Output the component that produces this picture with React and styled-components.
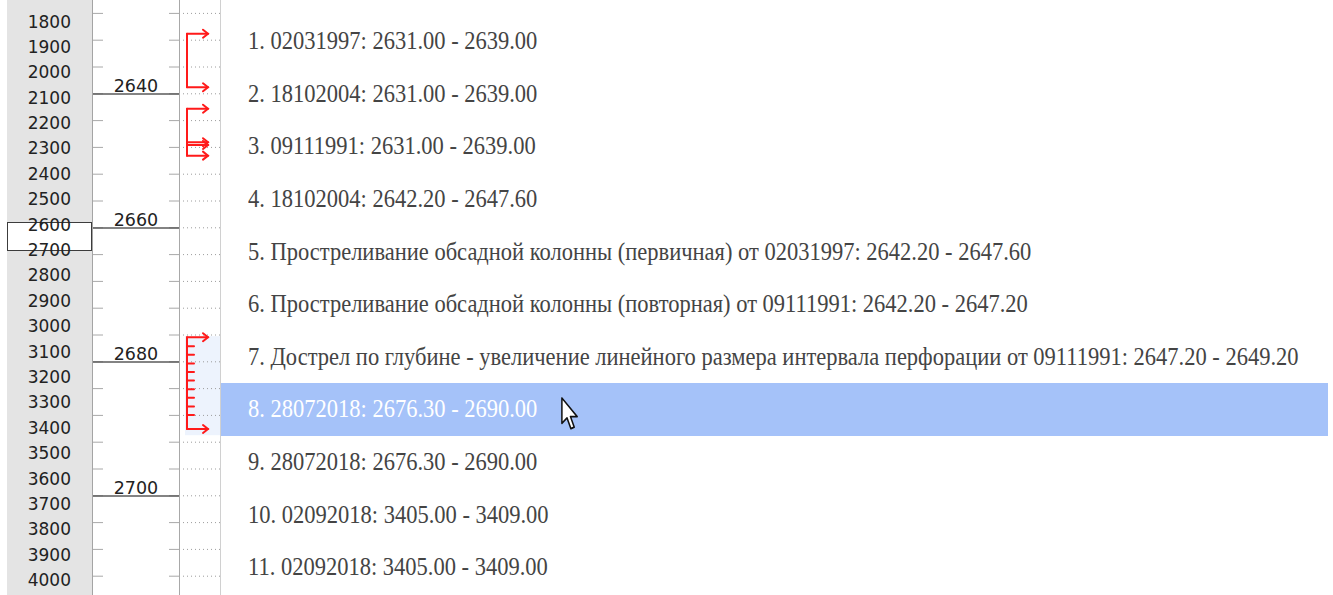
import styled, { createGlobalStyle } from 'styled-components';

const GlobalStyle = createGlobalStyle`
  html, body {
    margin: 0;
    padding: 0;
    background: #fff;
    overflow: hidden;
  }
`;

// depth axis: 2640 sits at y=94, one metre = 6.7px
const depthY = (d) => 94 + (d - 2640) * 6.7;
const TICK_STEP = 26.8;
const TICKS = Array.from({ length: 22 }, (_, k) => 13.4 + k * TICK_STEP);
const MAJORS = [
  { y: depthY(2640), label: '2640' },
  { y: depthY(2660), label: '2660' },
  { y: depthY(2680), label: '2680' },
  { y: depthY(2700), label: '2700' },
];

const SCALE = Array.from({ length: 23 }, (_, i) => 1800 + i * 100);

const INTERVALS = [
  '1. 02031997: 2631.00 - 2639.00',
  '2. 18102004: 2631.00 - 2639.00',
  '3. 09111991: 2631.00 - 2639.00',
  '4. 18102004: 2642.20 - 2647.60',
  '5. Простреливание обсадной колонны (первичная) от 02031997: 2642.20 - 2647.60',
  '6. Простреливание обсадной колонны (повторная) от 09111991: 2642.20 - 2647.20',
  '7. Дострел по глубине - увеличение линейного размера интервала перфорации от 09111991: 2647.20 - 2649.20',
  '8. 28072018: 2676.30 - 2690.00',
  '9. 28072018: 2676.30 - 2690.00',
  '10. 02092018: 3405.00 - 3409.00',
  '11. 02092018: 3405.00 - 3409.00',
];

const SELECTED = 7;

const Page = styled.div`
  position: relative;
  display: flex;
  height: 595px;
  padding-left: 7px;
  box-sizing: border-box;
`;

const ScaleColumn = styled.div`
  position: relative;
  width: 85px;
  flex: none;
  background: #e4e4e4;
  border-right: 1px solid #a4a4a4;
  padding-top: 9.5px;
  display: flex;
  flex-direction: column;
`;

const ScaleLabel = styled.div`
  position: relative;
  z-index: 1;
  height: 25.4px;
  line-height: 25.4px;
  padding-right: 21px;
  text-align: right;
  font-family: "DejaVu Sans", sans-serif;
  font-size: 17px;
  color: #222;
`;

const Window = styled.div`
  position: absolute;
  left: 0;
  top: 222px;
  width: 85px;
  height: 29px;
  box-sizing: border-box;
  border: 1.5px solid #3c3c3c;
  background: #fff;
`;

const Track = styled.svg`
  display: block;
  flex: none;
  height: 595px;
`;

const MarkerTrack = styled(Track)`
  border-right: 1px solid #d0d0d0;
`;

const List = styled.div`
  flex: 1;
  padding-top: 15px;
  padding-right: 5px;
  display: flex;
  flex-direction: column;
`;

const Row = styled.div`
  height: 52.6px;
  display: flex;
  align-items: center;
  padding-left: 27px;
  background: ${(p) => (p.$selected ? '#a5c2f9' : 'transparent')};
  color: ${(p) => (p.$selected ? '#fff' : '#444')};
`;

const RowText = styled.span`
  display: inline-block;
  font-family: "Liberation Serif", "Times New Roman", serif;
  font-size: 22.5px;
  white-space: nowrap;
  transform: scaleY(1.13);
`;

const Pointer = styled.svg`
  position: absolute;
  left: 561px;
  top: 397px;
  width: 18px;
  height: 34px;
`;

const DepthTrack = () => (
  <Track width="87" viewBox="0 0 87 595">
    {TICKS.map((y) => (
      <g key={y} stroke="#a8a8a8" strokeWidth="1">
        <line x1="0" y1={y} x2="10" y2={y} />
        <line x1="76" y1={y} x2="86" y2={y} />
      </g>
    ))}
    {MAJORS.map((m) => (
      <g key={m.label}>
        <line x1="0" y1={m.y} x2="86" y2={m.y} stroke="#5a5a5a" strokeWidth="1.3" />
        <text
          x="43"
          y={m.y - 2}
          textAnchor="middle"
          fontFamily="DejaVu Sans, sans-serif"
          fontSize="17.5"
          fill="#222"
        >
          {m.label}
        </text>
      </g>
    ))}
    <line x1="86.5" y1="0" x2="86.5" y2="595" stroke="#a8a8a8" strokeWidth="1" />
  </Track>
);

const Arrow = ({ y }) => (
  <g>
    <line x1="7" y1={y} x2="28" y2={y} />
    <polyline points={`23,${y - 4} 28,${y} 23,${y + 4}`} fill="none" />
  </g>
);

const Bracket = ({ from, to, arrows, comb }) => {
  const combTicks = [];
  if (comb) {
    for (let y = from + 9; y < to - 8; y += 8.6) combTicks.push(y);
  }
  return (
    <g stroke="#ff1a1a" strokeWidth="2" strokeLinecap="round">
      <line x1="7" y1={from} x2="7" y2={to} />
      {arrows.map((y) => (
        <Arrow key={y} y={y} />
      ))}
      {combTicks.map((y) => (
        <line key={y} x1="7" y1={y} x2="14" y2={y} />
      ))}
    </g>
  );
};

const Markers = () => (
  <MarkerTrack width="40" viewBox="0 0 40 595">
    <rect x="5" y={depthY(2676.3) - 1} width="35" height="99" fill="#edf3fd" />
    {TICKS.map((y) => (
      <line
        key={y}
        x1="3"
        y1={y}
        x2="40"
        y2={y}
        stroke="#9c9c9c"
        strokeWidth="1"
        strokeDasharray="1 3"
      />
    ))}
    <Bracket from={depthY(2631)} to={depthY(2639)} arrows={[depthY(2631), depthY(2639)]} />
    <Bracket
      from={depthY(2642.2)}
      to={depthY(2649.2)}
      arrows={[depthY(2642.2), depthY(2647.2), depthY(2647.6), depthY(2649.2)]}
    />
    <Bracket
      from={depthY(2676.3)}
      to={depthY(2690)}
      arrows={[depthY(2676.3), depthY(2690)]}
      comb
    />
  </MarkerTrack>
);

export default function App() {
  return (
    <>
      <GlobalStyle />
      <Page>
        <ScaleColumn>
          <Window />
          {SCALE.map((v) => (
            <ScaleLabel key={v}>{v}</ScaleLabel>
          ))}
        </ScaleColumn>
        <DepthTrack />
        <Markers />
        <List>
          {INTERVALS.map((text, i) => (
            <Row key={text + i} $selected={i === SELECTED}>
              <RowText>{text}</RowText>
            </Row>
          ))}
        </List>
        <Pointer viewBox="0 0 12 20" preserveAspectRatio="none">
          <path
            d="M0.6 0.6 L0.6 15.5 L4 12.3 L6.6 18.6 L8.8 17.7 L6.3 11.5 L10.8 11.5 Z"
            fill="#fff"
            stroke="#111"
            strokeWidth="1"
            strokeLinejoin="round"
          />
        </Pointer>
      </Page>
    </>
  );
}
